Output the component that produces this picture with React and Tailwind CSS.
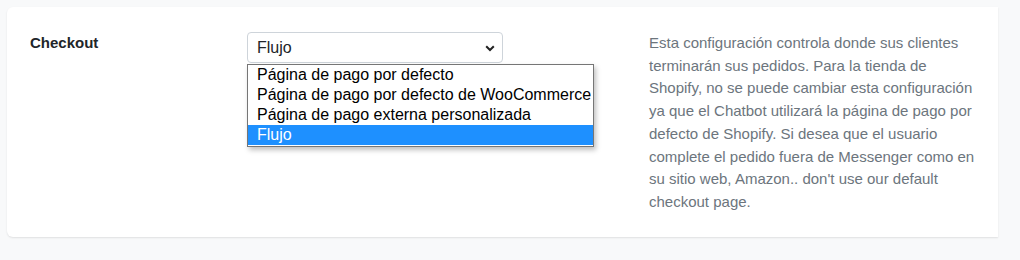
export default function App() {
  const options = [
    "Página de pago por defecto",
    "Página de pago por defecto de WooCommerce",
    "Página de pago externa personalizada",
    "Flujo",
  ];
  return (
    <div className="w-[1020px] h-[260px] bg-[#f8f9fa] pt-[7px] pl-[7px] font-['Liberation_Sans',Arial,sans-serif] overflow-hidden">
      <div className="w-[991px] h-[230px] bg-white rounded-l-[6px] shadow-[0_1px_2px_rgba(0,0,0,0.1)] pt-[25px] pl-[23px] grid grid-cols-[217px_402px_332px]">
        <div className="text-[15px] font-bold text-[#212529] pt-[1px] leading-[20px]">Checkout</div>
        <div className="relative">
          <div className="w-[256px] h-[31px] border border-[#ced4da] rounded-[4px] flex items-center justify-between pl-[9px] pr-[7px] text-[16px] text-[#212529]">
            <span>Flujo</span>
            <svg width="10" height="7" viewBox="0 0 10 7" className="mt-[1px]">
              <path d="M1.2 1.2 L5 5 L8.8 1.2" fill="none" stroke="#222" strokeWidth="2" />
            </svg>
          </div>
          <div className="absolute left-0 top-[32px] w-[347px] border border-[#767676] bg-white shadow-[2px_3px_5px_rgba(0,0,0,0.25)] pb-[1px]">
            {options.map((o, i) => (
              <div
                key={o}
                className={
                  i === 3
                    ? "h-[20px] leading-[20px] pl-[9px] text-[16px] bg-[#1e90ff] text-white"
                    : "h-[20px] leading-[20px] pl-[9px] text-[16px] text-black"
                }
              >
                {o}
              </div>
            ))}
          </div>
        </div>
        <p className="text-[15px] leading-[22.7px] text-[#6c757d]">
          Esta configuración controla donde sus clientes terminarán sus pedidos. Para la tienda de Shopify, no se puede cambiar esta configuración ya que el Chatbot utilizará la página de pago por defecto de Shopify. Si desea que el usuario complete el pedido fuera de Messenger como en su sitio web, Amazon.. don't use our default checkout page.
        </p>
      </div>
    </div>
  );
}
